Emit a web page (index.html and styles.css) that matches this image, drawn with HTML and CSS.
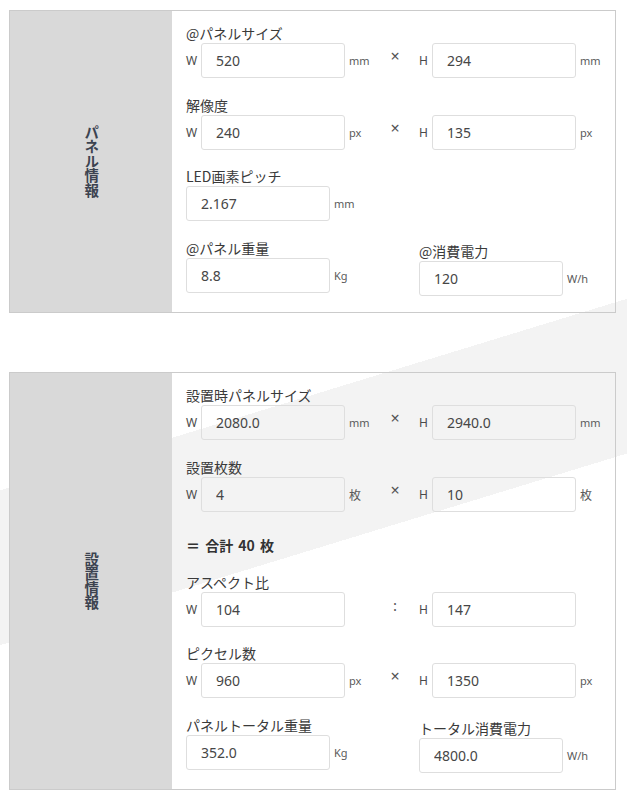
FILE: index.html
```html
<!DOCTYPE html>
<html lang="ja">
<head>
    <meta charset="UTF-8">
    <meta name="viewport" content="width=device-width, initial-scale=1.0">
    <title>パネル計算</title>
    <link rel="stylesheet" href="styles.css">
</head>
<body>
<div class="page">

    <!-- パネル情報 -->
    <section class="panel">
        <div class="panel-side"><span class="side-title">パネル情報</span></div>
        <div class="panel-body">
            <div class="field">
                <div class="field-label">@パネルサイズ</div>
                <div class="pair">
                    <span class="axis">W</span>
                    <input class="box" type="text" value="520">
                    <span class="unit">mm</span>
                    <span class="sep">×</span>
                    <span class="axis axis-h">H</span>
                    <input class="box" type="text" value="294">
                    <span class="unit">mm</span>
                </div>
            </div>
            <div class="field">
                <div class="field-label">解像度</div>
                <div class="pair">
                    <span class="axis">W</span>
                    <input class="box" type="text" value="240">
                    <span class="unit">px</span>
                    <span class="sep">×</span>
                    <span class="axis axis-h">H</span>
                    <input class="box" type="text" value="135">
                    <span class="unit">px</span>
                </div>
            </div>
            <div class="field">
                <div class="field-label">LED画素ピッチ</div>
                <div class="pair">
                    <input class="box" type="text" value="2.167">
                    <span class="unit">mm</span>
                </div>
            </div>
            <div class="split">
                <div class="field">
                    <div class="field-label">@パネル重量</div>
                    <div class="pair">
                        <input class="box" type="text" value="8.8">
                        <span class="unit">Kg</span>
                    </div>
                </div>
                <div class="field shift">
                    <div class="field-label">@消費電力</div>
                    <div class="pair">
                        <input class="box" type="text" value="120">
                        <span class="unit">W/h</span>
                    </div>
                </div>
            </div>
        </div>
    </section>

    <!-- 設置情報 -->
    <section class="panel panel-second">
        <div class="panel-side"><span class="side-title">設置情報</span></div>
        <div class="panel-body">
            <div class="field">
                <div class="field-label">設置時パネルサイズ</div>
                <div class="pair">
                    <span class="axis">W</span>
                    <input class="box" type="text" value="2080.0" readonly>
                    <span class="unit">mm</span>
                    <span class="sep">×</span>
                    <span class="axis axis-h">H</span>
                    <input class="box" type="text" value="2940.0" readonly>
                    <span class="unit">mm</span>
                </div>
            </div>
            <div class="field">
                <div class="field-label">設置枚数</div>
                <div class="pair">
                    <span class="axis">W</span>
                    <input class="box" type="text" value="4">
                    <span class="unit unit-cjk">枚</span>
                    <span class="sep">×</span>
                    <span class="axis axis-h">H</span>
                    <input class="box" type="text" value="10">
                    <span class="unit unit-cjk">枚</span>
                </div>
            </div>
            <div class="total">＝ 合計 40 枚</div>
            <div class="field">
                <div class="field-label">アスペクト比</div>
                <div class="pair">
                    <span class="axis">W</span>
                    <input class="box" type="text" value="104" readonly>
                    <span class="unit"></span>
                    <span class="sep sep-colon">:</span>
                    <span class="axis axis-h">H</span>
                    <input class="box" type="text" value="147" readonly>
                </div>
            </div>
            <div class="field">
                <div class="field-label">ピクセル数</div>
                <div class="pair">
                    <span class="axis">W</span>
                    <input class="box" type="text" value="960" readonly>
                    <span class="unit">px</span>
                    <span class="sep">×</span>
                    <span class="axis axis-h">H</span>
                    <input class="box" type="text" value="1350" readonly>
                    <span class="unit">px</span>
                </div>
            </div>
            <div class="split">
                <div class="field">
                    <div class="field-label">パネルトータル重量</div>
                    <div class="pair">
                        <input class="box" type="text" value="352.0" readonly>
                        <span class="unit">Kg</span>
                    </div>
                </div>
                <div class="field shift">
                    <div class="field-label">トータル消費電力</div>
                    <div class="pair">
                        <input class="box" type="text" value="4800.0" readonly>
                        <span class="unit">W/h</span>
                    </div>
                </div>
            </div>
        </div>
    </section>

</div>
</body>
</html>
```

FILE: styles.css
```css
html, body {
    margin: 0;
}
body {
    font-family: "Noto Sans", "Noto Sans CJK JP", sans-serif;
    color: #3a3a3a;
    background: #fff;
}
.page {
    min-height: 802px;
    padding: 10px 0 0 9px;
    box-sizing: border-box;
    /* the light diagonal band behind the panels */
    background: linear-gradient(163deg, #fff 469px, #f3f3f3 469px, #f3f3f3 617px, #fff 617px) no-repeat;
    background-size: 627px 802px;
}
.panel {
    width: 607px;
    display: flex;
    border: 1px solid #cbcbcb;
    box-sizing: border-box;
}
.panel-second {
    margin-top: 59px;
}
.panel-side {
    width: 162px;
    flex: none;
    background-color: #d9d9d9;
    display: flex;
    align-items: center;
    justify-content: center;
}
.side-title {
    writing-mode: vertical-rl;
    text-orientation: upright;
    font-family: "Noto Sans CJK JP", sans-serif;
    font-size: 14.5px;
    font-weight: bold;
    line-height: 1;
    color: #3c4350;
}
.panel-body {
    flex: 1;
    padding: 13px 0 16.5px 14px;
    display: flex;
    flex-direction: column;
    gap: 17.5px;
}
.field-label {
    font-family: "Noto Sans CJK JP", sans-serif;
    font-size: 14px;
    line-height: 19px;
    color: #3a3a3a;
}
.pair {
    display: flex;
    align-items: center;
}
.axis {
    width: 15px;
    flex: none;
    font-size: 12px;
    color: #4a4a4a;
}
.axis-h {
    width: 13px;
    margin-left: 14px;
}
.box {
    width: 144px;
    height: 35px;
    flex: none;
    box-sizing: border-box;
    border: 1px solid #dedede;
    border-radius: 3px;
    padding: 0 14px;
    font-family: "Noto Sans", sans-serif;
    font-size: 14px;
    color: #464646;
    background: transparent;
    outline: none;
}
.unit {
    width: 40px;
    flex: none;
    box-sizing: border-box;
    padding-left: 4px;
    font-size: 11px;
    color: #5a5a5a;
}
.unit-cjk {
    font-family: "Noto Sans CJK JP", sans-serif;
    font-size: 12px;
}
.sep {
    width: 20px;
    flex: none;
    align-self: flex-start;
    margin-top: 5px;
    text-align: center;
    font-size: 16px;
    line-height: 16px;
    color: #555;
}
.sep-colon {
    margin-top: 6px;
    font-size: 15px;
    line-height: 15px;
}
.total {
    margin-top: 6px;
    font-family: "Noto Sans CJK JP", sans-serif;
    font-size: 14px;
    font-weight: bold;
    line-height: 20px;
    word-spacing: 2px;
    color: #333;
}
.split {
    display: flex;
}
.split > .field:first-child {
    width: 233px;
}
.shift {
    margin-top: 3px;
}
```
